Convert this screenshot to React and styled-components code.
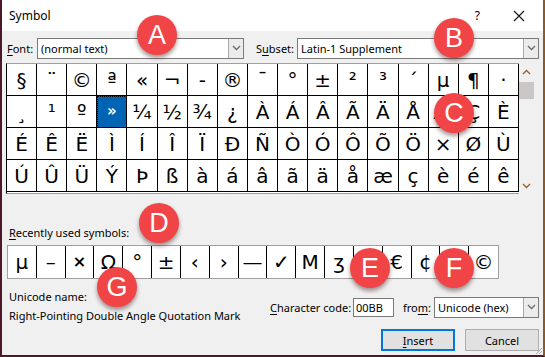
import React from "react";
import styled, { createGlobalStyle } from "styled-components";

const GlobalStyle = createGlobalStyle`
  html, body {
    margin: 0;
    padding: 0;
    background: #f0f0f0;
  }
  body {
    font-family: "Noto Sans", "Open Sans", sans-serif;
    font-size: 11px;
    color: #000;
  }
`;

const gridRows = [
  ["§", "¨", "©", "ª", "«", "¬", "-", "®", "¯", "°", "±", "²", "³", "´", "µ", "¶", "·"],
  ["¸", "¹", "º", "»", "¼", "½", "¾", "¿", "À", "Á", "Â", "Ã", "Ä", "Å", "Æ", "Ç", "È"],
  ["É", "Ê", "Ë", "Ì", "Í", "Î", "Ï", "Ð", "Ñ", "Ò", "Ó", "Ô", "Õ", "Ö", "×", "Ø", "Ù"],
  ["Ú", "Û", "Ü", "Ý", "Þ", "ß", "à", "á", "â", "ã", "ä", "å", "æ", "ç", "è", "é", "ê"],
];

const recent = ["µ", "–", "×", "Ω", "°", "±", "‹", "›", "—", "✓", "M", "ʒ", "″", "€", "¢", "¥", "©"];

const badges = [
  { letter: "A", x: 155, y: 35 },
  { letter: "B", x: 452, y: 38 },
  { letter: "C", x: 452, y: 113 },
  { letter: "D", x: 157, y: 223 },
  { letter: "E", x: 368, y: 268 },
  { letter: "F", x: 452, y: 268 },
  { letter: "G", x: 115, y: 287 },
];

const Chevron = ({ up, color = "#6d6d6d" }) => (
  <svg width="9" height="6" viewBox="0 0 9 6">
    <polyline
      points={up ? "1,5 4.5,1.5 8,5" : "1,1 4.5,4.5 8,1"}
      fill="none"
      stroke={color}
      strokeWidth="1.4"
    />
  </svg>
);

const Combo = ({ value, width }) => (
  <ComboBox $w={width}>
    <ComboText>{value}</ComboText>
    <DropButton>
      <Chevron />
    </DropButton>
  </ComboBox>
);

const App = () => {
  return (
    <>
      <GlobalStyle />
      <Window>
        <TitleBar>
          <Title>Symbol</Title>
          <TitleButtons>
            <HelpMark>?</HelpMark>
            <svg width="12" height="12" viewBox="0 0 12 12">
              <path d="M1 1 L11 11 M11 1 L1 11" stroke="#111" strokeWidth="1.1" />
            </svg>
          </TitleButtons>
        </TitleBar>

        <Body>
          <FieldRow>
            <Label $w={30}>
              <U>F</U>ont:
            </Label>
            <Combo value="(normal text)" width={207} />
            <Label $w={41} $ml={12}>
              S<U>u</U>bset:
            </Label>
            <Combo value="Latin-1 Supplement" />
          </FieldRow>

          <GridArea>
            <SymbolGrid>
              {gridRows.flat().map((ch, i) => (
                <Cell key={i} $selected={ch === "»"}>
                  {ch}
                </Cell>
              ))}
            </SymbolGrid>
            <ScrollBar>
              <ScrollArrow>
                <Chevron up color="#9a6432" />
              </ScrollArrow>
              <Thumb />
              <ScrollSpacer />
              <ScrollArrow>
                <Chevron color="#9a6432" />
              </ScrollArrow>
            </ScrollBar>
          </GridArea>

          <SectionLabel>
            <U>R</U>ecently used symbols:
          </SectionLabel>
          <RecentGrid>
            {recent.map((ch, i) => (
              <RecentCell key={i} $bold={ch === "×"}>
                {ch}
              </RecentCell>
            ))}
          </RecentGrid>

          <BottomArea>
            <NameColumn>
              <TextLine>Unicode name:</TextLine>
              <TextLine>Right-Pointing Double Angle Quotation Mark</TextLine>
            </NameColumn>
            <ControlColumn>
              <CodeRow>
                <Label $w={83}>
                  <U>C</U>haracter code:
                </Label>
                <CodeInput>00BB</CodeInput>
                <Label $w={31} $ml={9}>
                  fro<U>m</U>:
                </Label>
                <Combo value="Unicode (hex)" width={105} />
              </CodeRow>
              <ButtonRow>
                <Button $default>
                  <U>I</U>nsert
                </Button>
                <Button>Cancel</Button>
              </ButtonRow>
            </ControlColumn>
          </BottomArea>
        </Body>

        <Grip viewBox="0 0 10 10" width="10" height="10">
          <path d="M9 3 L3 9 M9 6 L6 9" stroke="#b0b0b0" strokeWidth="1" />
        </Grip>

        {badges.map((b) => (
          <Badge key={b.letter} style={{ left: b.x - 20, top: b.y - 20 }}>
            {b.letter}
          </Badge>
        ))}
      </Window>
    </>
  );
};

export default App;

const Window = styled.div`
  position: relative;
  width: 545px;
  height: 357px;
  box-sizing: border-box;
  background: #f0f0f0;
  border-left: 2px solid #4a1a2a;
  border-right: 2px solid #8b5a2b;
  border-bottom: 2px solid #4a1a2a;
  display: flex;
  flex-direction: column;
  overflow: hidden;
`;

const TitleBar = styled.div`
  height: 31px;
  background: #ffffff;
  display: flex;
  align-items: center;
  justify-content: space-between;
  padding: 0 18px 0 7px;
`;

const Title = styled.div`
  font-size: 12px;
  padding-bottom: 1px;
`;

const TitleButtons = styled.div`
  display: flex;
  align-items: center;
  gap: 33px;
`;

const HelpMark = styled.span`
  font-size: 12px;
`;

const Body = styled.div`
  flex: 1;
  display: flex;
  flex-direction: column;
  padding: 0 4px 0 4px;
`;

const FieldRow = styled.div`
  display: flex;
  align-items: center;
  height: 20px;
  margin-top: 7px;
  padding-left: 1px;
`;

const Label = styled.div`
  width: ${(p) => p.$w}px;
  margin-left: ${(p) => p.$ml || 0}px;
  flex-shrink: 0;
  white-space: nowrap;
`;

const U = styled.span`
  text-decoration: underline;
  text-underline-offset: 2px;
`;

const ComboBox = styled.div`
  display: flex;
  align-items: stretch;
  box-sizing: border-box;
  height: 21px;
  background: #fff;
  border: 1px solid #7a7a7a;
  ${(p) => (p.$w ? `width: ${p.$w}px; flex-shrink: 0;` : "flex: 1;")}
`;

const ComboText = styled.div`
  flex: 1;
  display: flex;
  align-items: center;
  padding-left: 3px;
  white-space: nowrap;
  overflow: hidden;
`;

const DropButton = styled.div`
  width: 15px;
  box-sizing: border-box;
  background: #ececec;
  border-left: 1px solid #a8a8a8;
  display: flex;
  align-items: center;
  justify-content: center;
`;

const GridArea = styled.div`
  display: flex;
  margin-top: 5px;
`;

const SymbolGrid = styled.div`
  width: 513px;
  display: grid;
  grid-template-columns: repeat(17, 1fr);
  grid-auto-rows: 32px;
  background: #fff;
  border-top: 1px solid #a0a0a0;
  border-left: 1px solid #000;
  border-bottom: 1px solid #a0a0a0;
  padding-bottom: 1px;
  box-sizing: border-box;
`;

const Cell = styled.div`
  display: flex;
  align-items: center;
  justify-content: center;
  border-right: 1px solid #000;
  border-bottom: 1px solid #000;
  font-family: "DejaVu Sans", Verdana, sans-serif;
  font-size: 20px;
  line-height: 1;
  color: ${(p) => (p.$selected ? "#fff" : "#000")};
  background: ${(p) => (p.$selected ? "#0064b4" : "#fff")};
  outline: ${(p) => (p.$selected ? "1px dotted #000" : "none")};
  outline-offset: -1px;
  ${(p) => p.$selected && "font-size: 15px; font-weight: bold;"}
`;

const ScrollBar = styled.div`
  width: 18px;
  padding-right: 3px;
  box-sizing: border-box;
  display: flex;
  flex-direction: column;
  align-items: stretch;
`;

const ScrollArrow = styled.div`
  height: 17px;
  display: flex;
  align-items: center;
  justify-content: center;
`;

const Thumb = styled.div`
  height: 17px;
  margin-top: 2px;
  background: #cdc6c6;
`;

const ScrollSpacer = styled.div`
  flex: 1;
`;

const SectionLabel = styled.div`
  margin-top: 30px;
  padding-left: 3px;
  height: 18px;
  line-height: 18px;
`;

const RecentGrid = styled.div`
  width: 492px;
  margin-left: 1px;
  margin-top: 3px;
  display: grid;
  grid-template-columns: repeat(17, 1fr);
  height: 34px;
  box-sizing: border-box;
  border: 1px solid #a0a0a0;
  background: #fff;
`;

const RecentCell = styled.div`
  display: flex;
  align-items: center;
  justify-content: center;
  border-right: 1px solid #000;
  font-family: "DejaVu Sans", Verdana, sans-serif;
  font-size: ${(p) => (p.$bold ? "16px" : "20px")};
  font-weight: ${(p) => (p.$bold ? "bold" : "normal")};
  line-height: 1;
  &:last-child {
    border-right: none;
  }
`;

const BottomArea = styled.div`
  display: flex;
  justify-content: space-between;
`;

const NameColumn = styled.div`
  padding-left: 3px;
  padding-top: 8px;
  display: flex;
  flex-direction: column;
`;

const TextLine = styled.div`
  height: 19px;
  line-height: 19px;
  white-space: nowrap;
`;

const ControlColumn = styled.div`
  width: 269px;
  padding-top: 17px;
  display: flex;
  flex-direction: column;
`;

const CodeRow = styled.div`
  display: flex;
  align-items: center;
  height: 22px;
`;

const CodeInput = styled.div`
  width: 41px;
  height: 19px;
  box-sizing: border-box;
  background: #fff;
  border: 1px solid #7a7a7a;
  padding-left: 2px;
  line-height: 17px;
  flex-shrink: 0;
`;

const ButtonRow = styled.div`
  display: flex;
  justify-content: flex-end;
  gap: 10px;
  margin-top: 11px;
`;

const Button = styled.div`
  width: 74px;
  height: 22px;
  box-sizing: border-box;
  background: #e1e1e1;
  border: ${(p) => (p.$default ? "2px solid #0078d7" : "1px solid #adadad")};
  display: flex;
  align-items: center;
  justify-content: center;
`;

const Grip = styled.svg`
  position: absolute;
  right: 0;
  bottom: 0;
`;

const Badge = styled.div`
  position: absolute;
  width: 40px;
  height: 40px;
  border-radius: 50%;
  background: #f04446;
  color: #fff;
  font-family: "Liberation Sans", Arial, sans-serif;
  font-size: 27px;
  display: flex;
  align-items: center;
  justify-content: center;
  box-shadow: 0 3px 4px rgba(60, 20, 20, 0.45);
`;
